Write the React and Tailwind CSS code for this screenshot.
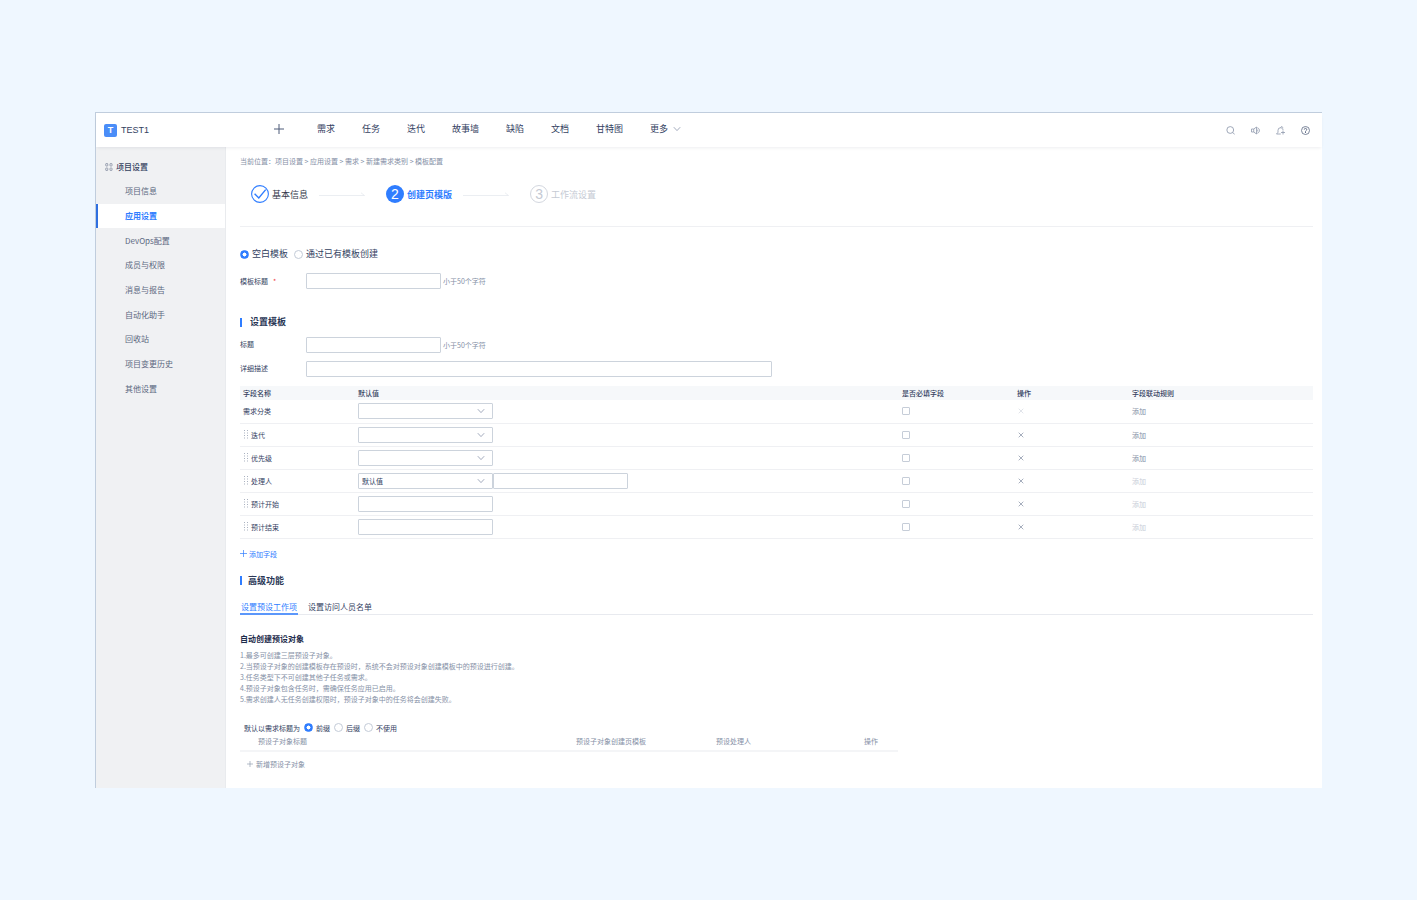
import { useState } from "react";

const navItems = ["需求", "任务", "迭代", "故事墙", "缺陷", "文档", "甘特图"];

const sideItems = [
  "项目信息",
  "应用设置",
  "DevOps配置",
  "成员与权限",
  "消息与报告",
  "自动化助手",
  "回收站",
  "项目变更历史",
  "其他设置",
];

const fields = [
  { name: "需求分类", kind: "select", fixed: true, linkable: true },
  { name: "迭代", kind: "select", linkable: true },
  { name: "优先级", kind: "select", linkable: true },
  { name: "处理人", kind: "person" },
  { name: "预计开始", kind: "text" },
  { name: "预计结束", kind: "text" },
];

const hints = [
  "1.最多可创建三层预设子对象。",
  "2.当预设子对象的创建模板存在预设时，系统不会对预设对象创建模板中的预设进行创建。",
  "3.任务类型下不可创建其他子任务或需求。",
  "4.预设子对象包含任务时，需确保任务应用已启用。",
  "5.需求创建人无任务创建权限时，预设子对象中的任务将会创建失败。",
];

function Plus({ className }) {
  return (
    <svg viewBox="0 0 10 10" className={className} fill="none" stroke="currentColor" aria-hidden="true">
      <path d="M5 0v10M0 5h10" />
    </svg>
  );
}

function Chevron({ className }) {
  return (
    <svg viewBox="0 0 8 6" className={className} fill="none" stroke="currentColor" strokeWidth="0.9" aria-hidden="true">
      <path d="M0.8 1.2 4 4.6 7.2 1.2" />
    </svg>
  );
}

function Box({ label, id, className = "w-[135px]" }) {
  return (
    <input
      id={id}
      type="text"
      aria-label={label}
      className={`h-4 rounded-[1px] border border-[#ccd3dc] bg-white px-1 text-[7px] text-[#33415f] outline-none focus:border-[#2f7dff] ${className}`}
    />
  );
}

function Picker({ label, value = "" }) {
  return (
    <div className="relative w-[135px]">
      <select
        aria-label={label}
        className="block h-4 w-full appearance-none rounded-[1px] border border-[#ccd3dc] bg-white pl-[3px] text-[7px] leading-[14px] text-[#33415f] outline-none focus:border-[#2f7dff]"
      >
        <option>{value}</option>
      </select>
      <Chevron className="pointer-events-none absolute top-[5px] right-2 h-[6px] w-2 text-[#98a2b5]" />
    </div>
  );
}

function Radio({ name, label, checked, onChange, className }) {
  return (
    <label className={`flex items-center ${className}`}>
      <input
        type="radio"
        name={name}
        checked={checked}
        onChange={onChange}
        className="size-[9px] shrink-0 appearance-none rounded-full border border-[#c3cbd8] bg-white checked:border-[#2f7dff] checked:bg-radial checked:from-white checked:from-35% checked:to-[#2f7dff] checked:to-45%"
      />
      {label}
    </label>
  );
}

function SectionTitle({ children, className }) {
  return (
    <h2 className={`flex h-[14px] items-center text-[9px] leading-[14px] font-bold text-[#2a3756] ${className}`}>
      <span className="h-[9px] w-[2px] bg-[#2f7dff]" />
      {children}
    </h2>
  );
}

function StepArrow() {
  return (
    <svg viewBox="0 0 46 6" className="mt-[2px] h-[6px] w-[46px]" fill="none" stroke="#e3e6ec" strokeWidth="0.7" aria-hidden="true">
      <path d="M0 3.500h45.500L42 0.800" />
    </svg>
  );
}

function DragDots() {
  return (
    <svg viewBox="0 0 4 9" className="h-[9px] w-1" fill="#a9b1bf" aria-hidden="true">
      {[0, 2.5, 5, 7.5].map((y) => (
        <g key={y}>
          <rect x="0" y={y} width="1" height="1" />
          <rect x="3" y={y} width="1" height="1" />
        </g>
      ))}
    </svg>
  );
}

function Header() {
  return (
    <header className="relative z-10 flex h-[34px] items-center bg-white pr-3 pl-2 shadow-[0_2px_3px_-1px_rgba(30,40,60,0.08)]">
      <div className="flex w-[170px] shrink-0 items-center gap-1">
        <span className="flex size-[13px] items-center justify-center rounded-[2px] bg-[#4a8df8] font-['Liberation_Sans',sans-serif] text-[9px] leading-[13px] font-bold text-white">
          T
        </span>
        <span className="font-['Liberation_Sans',sans-serif] text-[9px] leading-[13px] text-[#33415f]">TEST1</span>
      </div>
      <button type="button" aria-label="新建" className="mb-[2px] text-[#4c5a78]">
        <Plus className="size-[10px]" />
      </button>
      <nav className="mb-[2px] ml-[33px] flex items-center gap-[27px] text-[9px] leading-[14px] whitespace-nowrap text-[#33415f]">
        {navItems.map((item) => (
          <a key={item} href="#">
            {item}
          </a>
        ))}
        <a href="#" className="flex items-center gap-[5px]">
          更多
          <Chevron className="h-[6px] w-2 text-[#98a2b5]" />
        </a>
      </nav>
      <div className="ml-auto flex items-center gap-4 text-[#8e98ac]">
        <button type="button" aria-label="搜索">
          <svg viewBox="0 0 18 18" className="size-[9px]" fill="none" stroke="currentColor" strokeWidth="1.7">
            <circle cx="8.500" cy="8" r="6.800" />
            <path d="m13.500 13 4 4" />
          </svg>
        </button>
        <button type="button" aria-label="公告">
          <svg viewBox="0 0 18 18" className="size-[9px]" fill="none" stroke="currentColor" strokeWidth="1.6">
            <path d="M1 6h4.500l5.500-4v14l-5.500-4H1zM5.500 6v6M12.500 3.500c2.800.8 4.500 3 4.500 5.500s-1.700 4.700-4.500 5.500M13.500 7v4" />
          </svg>
        </button>
        <button type="button" aria-label="通知">
          <svg viewBox="0 0 18 18" className="size-[9px]" fill="none" stroke="currentColor" strokeWidth="1.6">
            <path d="M9.500 16H1l3-3.500V8.500A5 5 0 0 1 9 3.500c2.800 0 5 2 5 4.500M9 3.500 11 1l3.500 2.500M14 9v8M10 13h8" />
          </svg>
        </button>
        <button type="button" aria-label="帮助" className="text-[#66718a]">
          <svg viewBox="0 0 18 18" className="size-[9px]" fill="none" stroke="currentColor" strokeWidth="1.7">
            <circle cx="9" cy="9" r="8" />
            <path d="M6.500 7.200a2.500 2.500 0 1 1 3.600 2.200c-.8.4-1.100.8-1.100 1.600v3" strokeWidth="2" />
          </svg>
        </button>
      </div>
    </header>
  );
}

function Sidebar() {
  return (
    <aside className="w-[130px] shrink-0 border-r border-[#e9ebee] bg-[#f0f1f3] pt-[14px] text-[8px] leading-3">
      <div className="flex items-center gap-[3px] pl-[9px] font-medium text-[#33415f]">
        <svg viewBox="0 0 16 16" className="size-2" fill="none" stroke="#7d879b" strokeWidth="1.5" aria-hidden="true">
          <rect x="1.500" y="1" width="4" height="5" rx="1" />
          <rect x="10" y="1" width="4" height="5" rx="1" />
          <rect x="1.500" y="10" width="4" height="5" rx="1" />
          <rect x="10" y="10" width="4" height="5" rx="1" />
        </svg>
        项目设置
      </div>
      <nav className="mt-[6px] grid h-[222px] auto-rows-fr">
        {sideItems.map((item) => {
          const active = item === "应用设置";
          return (
            <a
              key={item}
              href="#"
              aria-current={active ? "page" : undefined}
              className={`flex items-center border-l-2 pl-[27px] ${
                active ? "border-[#2f6fe0] bg-white font-bold text-[#2f7dff]" : "border-transparent text-[#5b6780]"
              }`}
            >
              {item}
            </a>
          );
        })}
      </nav>
    </aside>
  );
}

function Steps() {
  return (
    <ol className="mt-[17px] flex h-[43px] items-start border-b border-[#eff0f3] pl-[11px] text-[9px] leading-[18px] whitespace-nowrap">
      <li className="flex items-center">
        <svg viewBox="0 0 18 18" className="size-[18px]" fill="none" stroke="#2f7dff" aria-hidden="true">
          <circle cx="9" cy="9" r="8.4" strokeWidth="1.1" />
          <path d="m3.600 8.800 4.200 4.100L14.700 4.600" strokeWidth="1.400" />
        </svg>
        <span className="mr-[11px] ml-[3px] pt-[2px] text-[#33384a]">基本信息</span>
        <StepArrow />
      </li>
      <li className="ml-[21px] flex items-center" aria-current="step">
        <span className="flex size-[18px] items-center justify-center rounded-full bg-[#2f7dff] font-['Liberation_Sans',sans-serif] text-[14px] text-white">
          2
        </span>
        <span className="mr-[11px] ml-[3px] pt-[2px] font-bold text-[#2f7dff]">创建页模版</span>
        <StepArrow />
      </li>
      <li className="ml-[21px] flex items-center text-[#c5cad4]">
        <span className="flex size-[18px] items-center justify-center rounded-full border border-[#d3d7df] font-['Liberation_Sans',sans-serif] text-[14px]">
          3
        </span>
        <span className="ml-[3px] pt-[2px]">工作流设置</span>
      </li>
    </ol>
  );
}

function FieldTable() {
  return (
    <table className="mt-[9px] w-full table-fixed border-collapse text-left text-[7px] leading-[14px] text-[#33415f]">
      <colgroup>
        <col className="w-[115px]" />
        <col />
        <col className="w-[115px]" />
        <col className="w-[115px]" />
        <col className="w-[184px]" />
      </colgroup>
      <thead>
        <tr className="h-[14px] bg-[#f6f8fa]">
          {["字段名称", "默认值", "是否必填字段", "操作", "字段联动规则"].map((head) => (
            <th key={head} className="py-0 pl-[3px] font-medium">
              {head}
            </th>
          ))}
        </tr>
      </thead>
      <tbody>
        {fields.map((field) => (
          <tr key={field.name} className="h-[23px] border-b border-[#eff0f3]">
            <td className="py-0 pl-[3px]">
              <div className={`flex items-center ${field.fixed ? "" : "gap-[3px] pl-[1px]"}`}>
                {!field.fixed && <DragDots />}
                {field.name}
              </div>
            </td>
            <td className="py-0 pl-[3px]">
              <div className="flex">
                {field.kind === "select" && <Picker label={field.name} />}
                {field.kind === "text" && <Box label={field.name} />}
                {field.kind === "person" && (
                  <>
                    <Picker label={field.name} value="默认值" />
                    <Box label="处理人默认值" />
                  </>
                )}
              </div>
            </td>
            <td className="py-0 pl-[3px]">
              <input
                type="checkbox"
                aria-label={`${field.name} 必填`}
                className="block size-2 appearance-none rounded-[1px] border border-[#c6cdd8] bg-white checked:bg-[#2f7dff]"
              />
            </td>
            <td className="py-0 pl-1">
              <button
                type="button"
                aria-label={`移除 ${field.name}`}
                disabled={field.fixed}
                className={`block ${field.fixed ? "text-[#d9dde4]" : "text-[#8f99ac]"}`}
              >
                <svg viewBox="0 0 6 6" className="size-[6px]" fill="none" stroke="currentColor" strokeWidth="0.8">
                  <path d="m0.700 0.700 4.600 4.600M5.300 0.700 0.700 5.300" />
                </svg>
              </button>
            </td>
            <td className="py-0 pl-[3px]">
              <button
                type="button"
                disabled={!field.linkable}
                className={`block ${field.linkable ? "text-[#8590a6]" : "text-[#c9ced8]"}`}
              >
                添加
              </button>
            </td>
          </tr>
        ))}
      </tbody>
    </table>
  );
}

export default function App() {
  const [source, setSource] = useState("空白模板");
  const [affix, setAffix] = useState("前缀");

  return (
    <div className="min-h-screen bg-[#eff7ff] px-[95px] py-28 font-['Noto_Sans_CJK_SC','Noto_Sans',sans-serif]">
      <div className="border-t border-l border-[#c0cddd] bg-white">
        <Header />
        <div className="flex">
          <Sidebar />
          <main className="min-w-0 flex-1 pt-2 pr-[9px] pb-[11px] pl-[14px] text-[7px] leading-3 text-[#33415f]">
            <p className="text-[#8590a6]">
              当前位置：项目设置 &gt; 应用设置 &gt; 需求 &gt; 新建需求类别 &gt; 模板配置
            </p>
            <Steps />

            <div className="mt-5 flex gap-[6px] text-[9px] leading-[14px]">
              {["空白模板", "通过已有模板创建"].map((item) => (
                <Radio
                  key={item}
                  name="source"
                  label={item}
                  checked={source === item}
                  onChange={() => setSource(item)}
                  className="gap-[3px]"
                />
              ))}
            </div>

            <div className="mt-3 flex items-center">
              <label htmlFor="tpl-title" className="w-[66px]">
                模板标题<span className="ml-[5px] text-[#f04040]">*</span>
              </label>
              <Box id="tpl-title" />
              <span className="ml-[2px] text-[#8590a6]">小于50个字符</span>
            </div>

            <SectionTitle className="mt-[26px] gap-2">设置模板</SectionTitle>
            <div className="mt-2 flex items-center">
              <label htmlFor="title" className="w-[66px] pb-[2px]">
                标题
              </label>
              <Box id="title" />
              <span className="ml-[2px] text-[#8590a6]">小于50个字符</span>
            </div>
            <div className="mt-2 flex items-center">
              <label htmlFor="desc" className="w-[66px] pb-[2px]">
                详细描述
              </label>
              <Box id="desc" className="w-[466px]" />
            </div>

            <FieldTable />
            <button type="button" className="mt-[9px] flex items-center gap-[2px] text-[#2f7dff]">
              <Plus className="size-[7px]" />
              添加字段
            </button>

            <SectionTitle className="mt-[14px] gap-[6px]">高级功能</SectionTitle>
            <div role="tablist" className="mt-3 flex h-[15px] gap-[9px] border-b border-[#e8eaef] text-[8px] leading-[13px]">
              <button
                type="button"
                role="tab"
                aria-selected="true"
                className="h-[15px] border-b-2 border-[#5b97fb] px-[1px] text-[#2f7dff]"
              >
                设置预设工作项
              </button>
              <button type="button" role="tab" aria-selected="false" className="h-[15px] border-b-2 border-transparent px-[1px]">
                设置访问人员名单
              </button>
            </div>

            <h3 className="mt-[18px] text-[8px] leading-3 font-bold text-[#1d2b4b]">自动创建预设对象</h3>
            <div className="mt-[5px] leading-[11px] text-[#8590a6]">
              {hints.map((hint) => (
                <p key={hint}>{hint}</p>
              ))}
            </div>

            <div className="mt-[17px] flex h-3 items-center gap-1 pl-1">
              <span>默认以需求标题为</span>
              {["前缀", "后缀", "不使用"].map((item) => (
                <Radio
                  key={item}
                  name="affix"
                  label={item}
                  checked={affix === item}
                  onChange={() => setAffix(item)}
                  className="gap-[3px]"
                />
              ))}
            </div>

            <table className="w-[658px] table-fixed border-collapse text-left text-[#8590a6]">
              <colgroup>
                <col />
                <col className="w-[140px]" />
                <col className="w-[148px]" />
                <col className="w-[34px]" />
              </colgroup>
              <thead>
                <tr className="h-[17px] border-b-2 border-[#f4f5f7]">
                  <th className="pt-0 pb-[2px] pl-[18px] font-normal">预设子对象标题</th>
                  <th className="p-0 pb-[2px] font-normal">预设子对象创建页模板</th>
                  <th className="p-0 pb-[2px] font-normal">预设处理人</th>
                  <th className="p-0 pb-[2px] font-normal">操作</th>
                </tr>
              </thead>
              <tbody>
                <tr className="h-[26px]">
                  <td colSpan={4} className="py-0 pl-[7px]">
                    <button type="button" className="flex items-center gap-[3px]">
                      <Plus className="size-[6px]" />
                      新增预设子对象
                    </button>
                  </td>
                </tr>
              </tbody>
            </table>
          </main>
        </div>
      </div>
    </div>
  );
}
